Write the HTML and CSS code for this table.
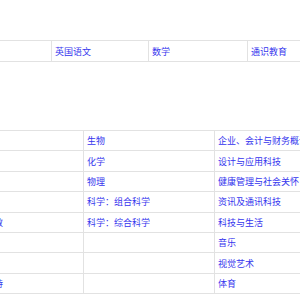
FILE: index.html
```
<!DOCTYPE html>
<html lang="zh">
<head>
<meta charset="utf-8">
<link rel="stylesheet" href="styles.css">
</head>
<body>
<div class="page">
  <table class="grid core">
    <colgroup><col class="c1"><col class="c2"><col class="c3"><col class="c4"></colgroup>
    <tr>
      <td><a href="#">中国语文</a></td>
      <td><a href="#">英国语文</a></td>
      <td><a href="#">数学</a></td>
      <td><a href="#">通识教育</a></td>
    </tr>
  </table>
  <table class="grid elective">
    <colgroup><col class="e1"><col class="e2"><col class="e3"></colgroup>
    <tr><td><a href="#">中国文学</a></td><td><a href="#">生物</a></td><td><a href="#">企业、会计与财务概论</a></td></tr>
    <tr><td><a href="#">英语文学</a></td><td><a href="#">化学</a></td><td><a href="#">设计与应用科技</a></td></tr>
    <tr><td><a href="#">中国历史</a></td><td><a href="#">物理</a></td><td><a href="#">健康管理与社会关怀</a></td></tr>
    <tr><td><a href="#">经济</a></td><td><a href="#">科学：组合科学</a></td><td><a href="#">资讯及通讯科技</a></td></tr>
    <tr><td><a href="#">伦理与宗教</a></td><td><a href="#">科学：综合科学</a></td><td><a href="#">科技与生活</a></td></tr>
    <tr><td><a href="#">地理</a></td><td></td><td><a href="#">音乐</a></td></tr>
    <tr><td><a href="#">历史</a></td><td></td><td><a href="#">视觉艺术</a></td></tr>
    <tr class="shade"><td><a href="#">旅游与款待</a></td><td></td><td><a href="#">体育</a></td></tr>
  </table>
</div>
</body>
</html>
```
FILE: styles.css
```
html, body {
  margin: 0;
  padding: 0;
  background: #ffffff;
  overflow: hidden;
}
.page {
  margin-left: -46px;
  width: 391px;
  padding-top: 40px;
  font-family: "Noto Sans CJK TC", "Noto Sans CJK SC", sans-serif;
  font-size: 9px;
}
.grid {
  border-collapse: collapse;
  table-layout: fixed;
  width: 391px;
}
.grid td {
  border: 1px solid #e2e2e2;
  padding: 0 3px;
  white-space: nowrap;
  overflow: hidden;
  text-align: left;
  vertical-align: middle;
}
.grid a {
  color: #3535ee;
  text-decoration: none;
}
.core td {
  height: 20px;
}
.c1 { width: 97px; }
.c2 { width: 97px; }
.c3 { width: 99px; }
.c4 { width: 98px; }
.elective {
  margin-top: 68px;
}
.elective td {
  height: 19.4px;
}
.e1 { width: 129px; }
.e2 { width: 131px; }
.e3 { width: 131px; }
.shade td {
  border-top-color: #dcdcdc;
}
```
